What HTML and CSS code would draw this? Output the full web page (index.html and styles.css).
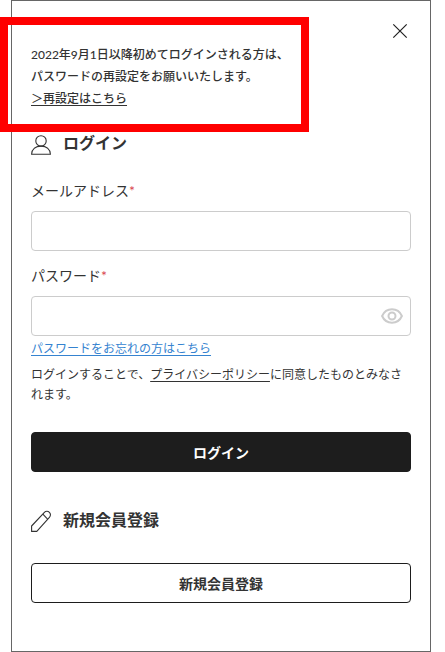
FILE: index.html
```html
<!DOCTYPE html>
<html lang="ja">
<head>
    <meta charset="UTF-8">
    <meta name="viewport" content="width=device-width, initial-scale=1.0">
    <title>ログイン</title>
    <link rel="stylesheet" href="styles.css">
</head>
<body>
    <main class="panel">
        <div class="panel-top">
            <p class="notice">
                2022年9月1日以降初めてログインされる方は、<br>
                パスワードの再設定をお願いいたします。<br>
                <a href="#">＞再設定はこちら</a>
            </p>
            <button type="button" class="close" aria-label="閉じる">
                <svg width="16" height="16" viewBox="0 0 16 16" fill="none" stroke="#222" stroke-width="1.2">
                    <path d="M1.3 1.3l13.4 13.4M14.7 1.3L1.3 14.7"/>
                </svg>
            </button>
        </div>

        <form class="login">
            <h2 class="heading">
                <svg width="20" height="20" viewBox="0 0 20 20" fill="none" stroke="#333" stroke-width="1.1">
                    <circle cx="10" cy="5.9" r="5.2"/>
                    <path d="M.6 19.2C.9 14.1 4.7 11.100 10 11.100s9.100 3 9.400 8.100z"/>
                </svg>
                ログイン
            </h2>

            <label class="label" for="email">メールアドレス<span class="required">*</span></label>
            <div class="field">
                <input type="email" id="email" required>
            </div>

            <label class="label" for="password">パスワード<span class="required">*</span></label>
            <div class="field">
                <input type="password" id="password" required>
                <button type="button" class="toggle" aria-label="パスワードを表示">
                    <svg width="22" height="16" viewBox="0 0 22 16" fill="none" stroke="#ccc" stroke-width="2">
                        <path d="M1.1 8C3 3.700 6.600 1.300 11 1.300S19 3.700 20.900 8C19 12.300 15.400 14.700 11 14.700S3 12.300 1.100 8z"/>
                        <circle cx="11" cy="8" r="3.500"/>
                    </svg>
                </button>
            </div>

            <a class="forgot" href="#">パスワードをお忘れの方はこちら</a>
            <p class="terms">ログインすることで、<a href="#">プライバシーポリシー</a>に同意したものとみなされます。</p>
            <button type="submit" class="btn btn-dark">ログイン</button>
        </form>

        <section class="register">
            <h2 class="heading">
                <svg width="20" height="22" viewBox="0 0 20 22" fill="none" stroke="#333" stroke-width="1.1" stroke-linejoin="round">
                    <path d="M.6 21.400V16L13.400 2.300a3.500 3.500 0 0 1 5 0a3.500 3.500 0 0 1 0 5L5.800 21.400z"/>
                    <path d="M11.900 4.200l4.700 4.900"/>
                </svg>
                新規会員登録
            </h2>
            <button type="button" class="btn btn-outline">新規会員登録</button>
        </section>
    </main>
    <div class="highlight"></div>
</body>
</html>
```
FILE: styles.css
```css
* {
    box-sizing: border-box;
}

body {
    margin: 0 14px 0 11px;
    font-family: Lato, "Noto Sans CJK JP", sans-serif;
    font-size: 12px;
    color: #333;
    background-color: #fff;
}

a {
    color: inherit;
    text-underline-offset: 2px;
}

button {
    padding: 0;
    border: none;
    background: none;
    font-family: inherit;
    cursor: pointer;
}

svg {
    display: block;
    flex-shrink: 0;
}

.panel {
    padding: 22px 19px 48px;
    border: 1px solid #666;
}

.panel-top {
    display: flex;
    justify-content: space-between;
    align-items: flex-start;
}

.notice {
    margin: 21px 0;
    line-height: 22px;
    font-weight: 500;
}

.close {
    padding: 0 3px;
}

/* Red frame around the notice */
.highlight {
    position: absolute;
    top: 17px;
    left: 0;
    width: 309px;
    height: 115px;
    border: 8px solid #f00;
}

.heading {
    display: flex;
    align-items: flex-end;
    gap: 12px;
    margin: 0;
    font-size: 16px;
    line-height: 24px;
}

.label {
    display: block;
    margin: 26px 0 10px;
    font-size: 14px;
    line-height: 20px;
}

.field + .label {
    margin-top: 15px;
}

.required {
    color: #d9434e;
}

.field {
    display: flex;
    height: 40px;
    border: 1px solid #ccc;
    border-radius: 4px;
}

.field:focus-within {
    border-color: #1d1d1d;
}

.field input {
    flex: 1;
    min-width: 0;
    padding: 0 12px;
    border: none;
    outline: none;
    background: none;
    font-size: 14px;
}

.toggle {
    padding: 0 7px;
}

.forgot {
    display: block;
    margin-top: 3px;
    line-height: 20px;
    color: #3583d0;
}

.terms {
    margin: 6px 0 27px;
    line-height: 20px;
}

.btn {
    display: block;
    width: 100%;
    height: 40px;
    border: 1px solid #1d1d1d;
    border-radius: 4px;
    font-size: 14px;
    font-weight: bold;
}

.btn-dark {
    color: #fff;
    background-color: #1d1d1d;
}

.btn-outline {
    color: #333;
    background-color: #fff;
}

.register {
    margin-top: 36px;
}

.register .btn {
    margin-top: 31px;
}
```
